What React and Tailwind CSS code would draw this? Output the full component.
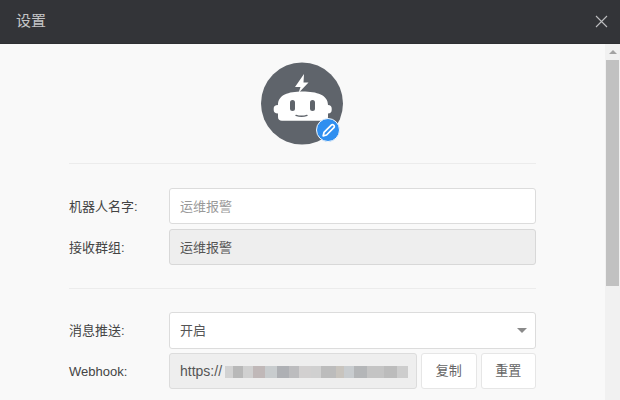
const FONT = '"Liberation Sans", "Noto Sans CJK SC", sans-serif';
const blocks = [
  ['#d2d2d2', 8], ['#b8b8b8', 10], ['#d0d0d0', 10], ['#c0b8b8', 12], ['#c8ccce', 12], ['#aeb0b4', 12],
  ['#bcbcbe', 10], ['#d2d0d0', 12], ['#d0d0d0', 10], ['#bcbcbc', 15], ['#c8c4be', 8], ['#c8cccf', 10],
  ['#b4b6b8', 13], ['#c4c4c4', 17], ['#bcbcbc', 13], ['#cdcdcd', 11],
];

function Row({ label, children }) {
  return (
    <div className="flex items-center">
      <div className="w-[100px] shrink-0 pt-[1px] text-[13px] text-[#444]">{label}</div>
      <div className="flex-1 min-w-0">{children}</div>
    </div>
  );
}

export default function App() {
  return (
    <div className="w-[620px] h-[400px] overflow-hidden flex flex-col bg-[#f9f9f9]" style={{ fontFamily: FONT }}>
      <header className="h-[44px] shrink-0 bg-[#333438] border-b border-[#2e2f32] flex items-center justify-between pl-[16px] pr-[12px]">
        <span className="text-[15px] text-[#c4c5c7]">设置</span>
        <svg width="13" height="13" viewBox="0 0 13 13" fill="none" stroke="#bdbec0" strokeWidth="1.1">
          <path d="M1 1L12 12M12 1L1 12" />
        </svg>
      </header>
      <div className="flex-1 flex min-h-0">
        <main className="flex-1 min-w-0 pl-[69px] pr-[69px] pt-[18px]">
          <div className="flex justify-center pb-[18px] border-b border-[#ececec]">
            <div className="relative w-[82px] h-[83px] -ml-px">
              <svg width="82" height="83" viewBox="0 0 82 83">
                <circle cx="41" cy="41.5" r="41" fill="#5f646b" />
                <path d="M43 12L34 25H39.5L37.5 31L47.5 20.5H42.5Z" fill="#fff" />
                <path d="M17 43C17 33 27 29.5 41.5 29.5C56 29.5 67 33 67 43C69.5 43 70.7 44.5 70.7 46.5V48C70.7 50 69.5 51.5 67 51.5V55C67 57.5 65.5 58.7 63 58.7H21C18.5 58.7 17 57.5 17 55V51.5C14 51.5 12.7 50 12.7 48V46.5C12.7 44.5 14 43 17 43Z" fill="#fff" />
                <rect x="29" y="38" width="5" height="11" rx="2.5" fill="#5f646b" />
                <rect x="49" y="38" width="5" height="11" rx="2.5" fill="#5f646b" />
                <path d="M35 53.4C38 54.4 43 54.4 46 53.4" stroke="#5f646b" strokeWidth="1.4" fill="none" strokeLinecap="round" />
              </svg>
              <div className="absolute left-[55px] top-[56px] w-[24px] h-[24px] rounded-full bg-[#2f8ff0] border border-[#f4f8fc] flex items-center justify-center">
                <svg width="15" height="15" viewBox="0 0 14 14" fill="none" stroke="#fff" strokeWidth="1.6" strokeLinejoin="round">
                  <path d="M2 12L2.8 8.8L9.6 2C10.2 1.4 11.2 1.4 11.9 2.1C12.6 2.8 12.6 3.8 12 4.4L5.2 11.2L2 12Z" />
                </svg>
              </div>
            </div>
          </div>

          <div className="pt-[24px] pb-[23px] border-b border-[#ececec] flex flex-col gap-[5px]">
            <Row label="机器人名字:">
              <div className="h-[36px] rounded-[3px] border border-[#dcdcdc] bg-white flex items-center px-[10px] pt-[1px] text-[13px] text-[#999]">运维报警</div>
            </Row>
            <Row label="接收群组:">
              <div className="h-[36px] rounded-[3px] border border-[#d8d8d8] bg-[#eeeeee] flex items-center px-[10px] pt-[1px] text-[13px] text-[#555]">运维报警</div>
            </Row>
          </div>

          <div className="pt-[23px] flex flex-col gap-[4px]">
            <Row label="消息推送:">
              <div className="h-[37px] rounded-[3px] border border-[#dcdcdc] bg-white flex items-center justify-between pl-[10px] pr-[8px] text-[13px] text-[#555]">
                <span>开启</span>
                <span className="w-0 h-0 border-x-[5px] border-x-transparent border-t-[5px] border-t-[#8a8a8a]"></span>
              </div>
            </Row>
            <Row label="Webhook:">
              <div className="flex gap-[4px]">
                <div className="w-[248px] shrink-0 h-[36px] rounded-[3px] border border-[#dcdcdc] bg-[#eeeeee] flex items-center pl-[10px] text-[14px] text-[#555] overflow-hidden">
                  <span className="pt-[1px]">https://</span>
                  <div className="flex h-[12px] ml-[3px] blur-[0.6px] translate-y-[1px]">
                    {blocks.map(([c, w], i) => (
                      <div key={i} className="h-full" style={{ backgroundColor: c, width: w }}></div>
                    ))}
                  </div>
                </div>
                <button className="flex-1 h-[36px] rounded-[3px] border border-[#e6e6e6] bg-white text-[13px] text-[#666]">复制</button>
                <button className="flex-1 h-[36px] rounded-[3px] border border-[#e6e6e6] bg-white text-[13px] text-[#666]">重置</button>
              </div>
            </Row>
          </div>
        </main>
        <aside className="w-[15px] shrink-0 bg-[#f1f1f1] flex flex-col items-center">
          <div className="h-[16px] flex items-center justify-center">
            <span className="w-0 h-0 border-x-[4px] border-x-transparent border-b-[4px] border-b-[#a3a3a3]"></span>
          </div>
          <div className="w-[13px] h-[226px] bg-[#c1c1c1]"></div>
        </aside>
      </div>
    </div>
  );
}
